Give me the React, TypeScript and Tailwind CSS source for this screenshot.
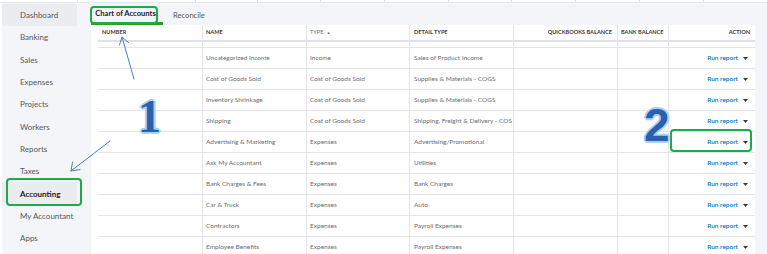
import React from "react";

const rows: [string, string, string][] = [
  ["Uncategorized Income", "Income", "Sales of Product Income"],
  ["Cost of Goods Sold", "Cost of Goods Sold", "Supplies & Materials - COGS"],
  ["Inventory Shrinkage", "Cost of Goods Sold", "Supplies & Materials - COGS"],
  ["Shipping", "Cost of Goods Sold", "Shipping, Freight & Delivery - COS"],
  ["Advertising & Marketing", "Expenses", "Advertising/Promotional"],
  ["Ask My Accountant", "Expenses", "Utilities"],
  ["Bank Charges & Fees", "Expenses", "Bank Charges"],
  ["Car & Truck", "Expenses", "Auto"],
  ["Contractors", "Expenses", "Payroll Expenses"],
  ["Employee Benefits", "Expenses", "Payroll Expenses"],
];

const nav = [
  "Dashboard",
  "Banking",
  "Sales",
  "Expenses",
  "Projects",
  "Workers",
  "Reports",
  "Taxes",
  "Accounting",
  "My Accountant",
  "Apps",
];

const cols = "grid grid-cols-[105px_104px_103px_104px_104px_51px_85px]";

function Caret() {
  return (
    <svg width="5" height="3" viewBox="0 0 5 3" className="ml-[5px]">
      <path d="M0 0 L5 0 L2.5 3 Z" fill="#393a3d" />
    </svg>
  );
}

export default function App() {
  return (
    <div className="relative w-[767px] h-[254px] overflow-hidden bg-[#f4f5f8] font-['Lato','Open_Sans',sans-serif]">
      {/* top cut-off strip */}
      <div className="flex h-[3px] bg-white border-b border-[#e6e7ea]">
        {[78, 118, 62, 63, 64, 64, 63, 64, 64, 64].map((w, i) => (
          <div key={i} className="h-full border-r border-[#dcdde0]" style={{ width: w }} />
        ))}
      </div>
      <div className="flex h-[251px] overflow-hidden">
        {/* left cut-off strip */}
        <div className="w-[2px] bg-white shrink-0" />
        {/* sidebar */}
        <div className="w-[89px] shrink-0 pt-[1px] flex flex-col">
          {nav.map((n) => (
            <div
              key={n}
              className={`h-[22.3px] shrink-0 w-[75px] flex items-center pl-[18px] text-[8px] ${
                n === "Dashboard" || n === "Accounting" ? "bg-[#ebecef]" : ""
              } ${n === "Accounting" ? "font-bold text-[#1f2024]" : "text-[#55575d]"}`}
            >
              {n}
            </div>
          ))}
        </div>
        {/* main */}
        <div className="flex-1 flex flex-col overflow-hidden">
          <div className="h-[22px] shrink-0 flex items-end pl-[-2px]">
            <div className="h-full ml-[-3px] flex items-center text-[7.6px] font-bold text-[#1f2024] border-b-[3px] border-[#2ca01c] w-[75px] justify-center pt-[3px]">
              Chart of Accounts
            </div>
            <div className="h-full flex items-center ml-[10px] pt-[3px] text-[7.6px] text-[#55575d]">
              Reconcile
            </div>
          </div>
          <div className="flex-1 flex overflow-hidden">
            <div className="w-[664px] shrink-0 bg-white pl-[7px]">
              {/* header */}
              <div className={`${cols} h-[15px] text-[5.6px] font-bold text-[#393a3d] whitespace-nowrap`}>
                <div className="flex items-center pl-[4px] border-r border-[#e3e5e8]">NUMBER</div>
                <div className="flex items-center pl-[3px] border-r border-[#e3e5e8]">NAME</div>
                <div className="flex items-center pl-[3px] border-r border-[#e3e5e8] font-normal text-[#6b6c72]">
                  TYPE <span className="ml-[3px] text-[4px]">▲</span>
                </div>
                <div className="flex items-center pl-[4px] border-r border-[#e3e5e8]">DETAIL TYPE</div>
                <div className="flex items-center justify-end pr-[5px] border-r border-[#e3e5e8]">QUICKBOOKS BALANCE</div>
                <div className="flex items-center pl-[3px] border-r border-[#e3e5e8]">BANK BALANCE</div>
                <div className="flex items-center justify-end pr-[4px]">ACTION</div>
              </div>
              <div className="h-[2px] bg-[#dfe1e4]" />
              <div className={`${cols} h-[6px] border-b border-[#e3e5e8]`}>
                {[0, 1, 2, 3, 4, 5].map((i) => (
                  <div key={i} className="border-r border-[#e3e5e8]" />
                ))}
                <div />
              </div>
              {rows.map(([name, type, detail]) => (
                <div key={name} className={`${cols} h-[21px] border-b border-[#e3e5e8] text-[6.5px] text-[#6b6c72] whitespace-nowrap`}>
                  <div className="border-r border-[#e3e5e8]" />
                  <div className="flex items-center pl-[3px] border-r border-[#e3e5e8]">{name}</div>
                  <div className="flex items-center pl-[3px] border-r border-[#e3e5e8]">{type}</div>
                  <div className="flex items-center pl-[4px] border-r border-[#e3e5e8]">{detail}</div>
                  <div className="border-r border-[#e3e5e8]" />
                  <div className="border-r border-[#e3e5e8]" />
                  <div className="flex items-center justify-end pr-[6px] text-[#0077c5] font-semibold">
                    Run report
                    <Caret />
                  </div>
                </div>
              ))}
            </div>
          </div>
        </div>
      </div>

      {/* annotations: green boxes */}
      <div className="absolute left-[90px] top-[6px] w-[68px] h-[18px] border-2 border-[#1faa48] rounded-[4px]" />
      <div className="absolute left-[6px] top-[178px] w-[76px] h-[28px] border-[2.5px] border-[#1faa48] rounded-[4px]" />
      <div className="absolute left-[670px] top-[129px] w-[82px] h-[23px] border-[2.5px] border-[#1faa48] rounded-[4px]" />

      {/* numbers */}
      <div className="absolute left-[138px] top-[94px] text-[46px] leading-none font-bold font-['Liberation_Serif',serif] text-[#2c5fae] [text-shadow:0_0_1px_#b9dcff,1px_1px_0_#a9d0f7,-1px_-1px_0_#a9d0f7,1px_-1px_0_#a9d0f7,-1px_1px_0_#a9d0f7,2px_0_0_#a9d0f7,-2px_0_0_#a9d0f7,0_2px_0_#a9d0f7,0_-2px_0_#a9d0f7]">
        1
      </div>
      <div className="absolute left-[644px] top-[102px] text-[46px] leading-none font-bold font-['Liberation_Sans',sans-serif] text-[#2c5fae] [text-shadow:0_0_1px_#b9dcff,1px_1px_0_#a9d0f7,-1px_-1px_0_#a9d0f7,1px_-1px_0_#a9d0f7,-1px_1px_0_#a9d0f7,2px_0_0_#a9d0f7,-2px_0_0_#a9d0f7,0_2px_0_#a9d0f7,0_-2px_0_#a9d0f7]">
        2
      </div>

      {/* arrows */}
      <svg className="absolute inset-0 pointer-events-none" width="767" height="254" viewBox="0 0 767 254">
        <g stroke="#4a7ccb" strokeWidth="1" fill="none" strokeLinecap="round">
          <line x1="134" y1="79" x2="122" y2="37" />
          <polyline points="119.5,45 122,37 128.5,42.5" />
          <line x1="110" y1="141" x2="71" y2="171" />
          <polyline points="72.5,162 71,171 80,169.5" />
        </g>
      </svg>
    </div>
  );
}
